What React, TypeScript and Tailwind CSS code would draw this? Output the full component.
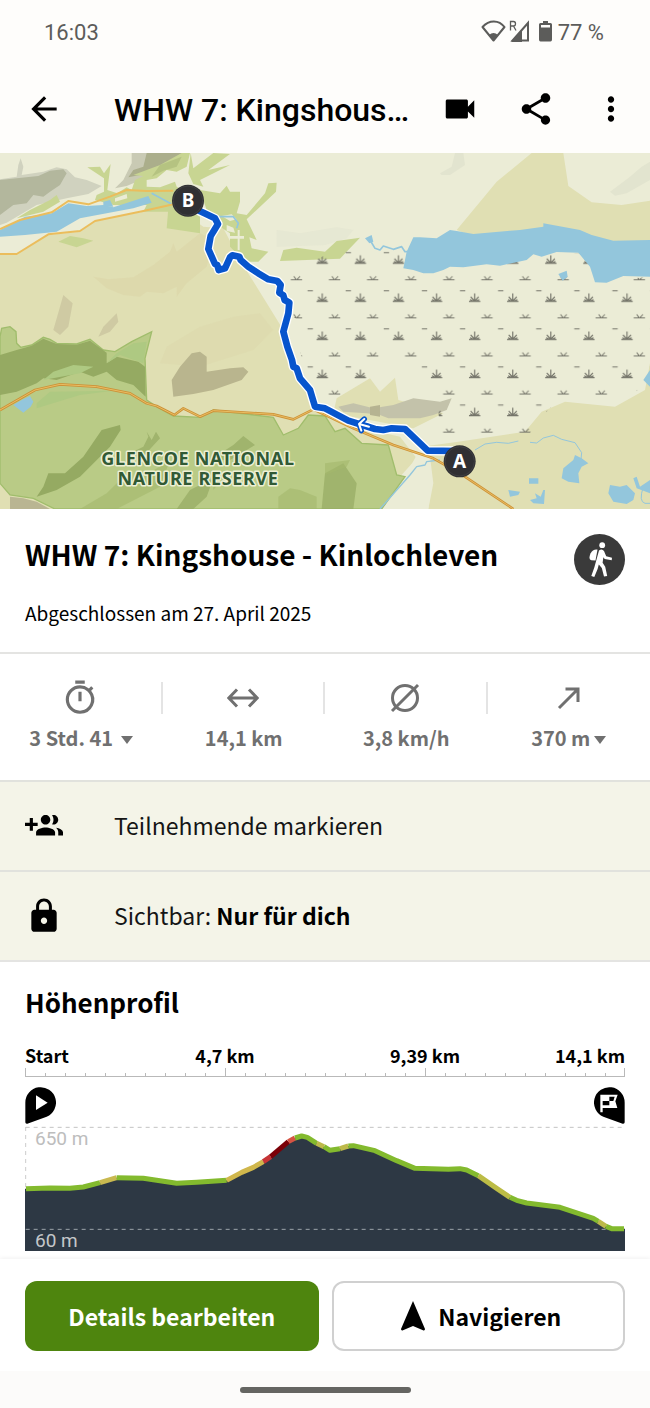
import type { ReactNode } from "react";
import { MdArrowBack, MdLock, MdMoreVert, MdOutlineTimer, MdShare, MdVideocam } from "react-icons/md";

const LAKE = "#93c6dc";

function StatusBar() {
  return (
    <div className="flex h-16 items-center justify-between pl-11 pr-[46px] text-[22px] text-[#5c5c5a]">
      <span>16:03</span>
      <div className="flex items-center">
        <svg className="h-6 w-[52px]" viewBox="0 0 52 24" aria-label="WLAN und Mobilfunk">
          <path d="M1.5 7C8-.5 18-.5 23.500 7L12.500 20.500Z" fill="none" stroke="currentColor" strokeWidth="2" strokeLinejoin="round" />
          <path d="M8 15q4.500-4 9 0l-4.500 6z" fill="currentColor" />
          <path d="M47 3v17.500H31.500z" fill="none" stroke="currentColor" strokeWidth="2" />
          <path d="M30 22 41 10v12z" fill="currentColor" />
          <path d="M29.500 10.500V1.500h3q2 0 2 2.200t-2 2.300h-3m3 0 2.500 4.500" fill="none" stroke="currentColor" strokeWidth="1.300" />
        </svg>
        <svg className="ml-1.5 h-6 w-[13px]" viewBox="0 0 13 24" aria-label="Akku">
          <path d="M4 1h5v2h2.500Q13 3 13 4.500v15q0 2-1.500 2h-10Q0 21.500 0 19.500v-15Q0 3 1.500 3H4zM2 5v2.500h9V5z" fill="currentColor" fillRule="evenodd" />
        </svg>
        <span className="ml-1.5">77 %</span>
      </div>
    </div>
  );
}

function Header() {
  return (
    <header className="flex h-[89px] items-center pl-[25px] pr-5">
      <button aria-label="Zurück"><MdArrowBack size={38} /></button>
      <p className="ml-[51px] min-w-0 flex-1 whitespace-nowrap pt-0.5 text-[32px] font-medium leading-10">WHW 7: Kingshous…</p>
      <button aria-label="Video"><MdVideocam size={38} /></button>
      <button className="ml-[38px]" aria-label="Teilen"><MdShare size={38} /></button>
      <button className="ml-[37px]" aria-label="Mehr"><MdMoreVert size={38} /></button>
    </header>
  );
}

const routePath =
  "M585 176 645 205 654 222 632 258 625 297 645 342 652 345 656 360 675 355 690 322 697 316 718 320 722 330 745 350 775 370 805 388 832 393 842 405 838 428 850 436 854 450 868 458 865 490 850 545 862 590 876 630 880 650 890 655 900 685 930 720 945 770 975 775 1045 812 1125 837 1150 840 1175 835 1215 837 1283 902 1375 903";

function Marker({ x, y, label }: { x: number; y: number; label: string }) {
  return (
    <g>
      <circle cx={x} cy={y} r="48" fill="#303033" />
      <circle cx={x} cy={y} r="44" fill="none" stroke="#454548" strokeWidth="2" />
      <text x={x} y={y + 20} textAnchor="middle" fontSize="57" fontWeight="700" fill="#fff">{label}</text>
    </g>
  );
}

function RouteMap() {
  return (
    <svg className="block w-full font-['Noto_Sans',sans-serif]" viewBox="0 9 1950 1068" role="img" aria-label="Karte der Tour">
      <defs>
        <pattern id="marsh" x="1026" y="294" width="114.300" height="114.300" patternUnits="userSpaceOnUse">
          <g fill="none" stroke="#75756a" strokeWidth="3.500">
            <path d="M38 46h34M55 45V22M54 44 43 32M56 44l11-12M50 45l-9-5M60 45l9-5" />
            <path d="M75 95h34M91 94 84 85M94 94l9-9" strokeWidth="3" />
            <path d="M11 14h16" strokeWidth="3" />
          </g>
        </pattern>
      </defs>
      <rect y="9" width="1950" height="1068" fill="#ebecd6" />

      {/* heath */}
      <g fill="#e0dfb3">
        <path d="M0 315 50 312 145 255 240 245 285 213 430 185 520 165 610 230 670 235 720 330 850 540 880 660 950 760 1070 830 1200 860 1250 925 1200 980 1150 1077H0Z" />
        <path d="M1370 240 1490 95 1595 9H1690L1705 108 1775 157 1865 165 1950 152V290H1500Z" />
        <path d="M1010 745 1110 685 1140 725 1185 683 1195 750 1330 790 1240 835 1000 790Z" />
        <path d="M1265 890 1375 875 1575 845 1625 785 1695 755 1845 770 1935 720 1950 640V1077H1285L1295 1000Z" />
      </g>
      <path d="M1250 915 1290 920 1300 1000 1285 1077H1145L1215 980Z" fill="#ebecd6" />
      <g fill="#e2e4cf">
        <path d="M1320 70 1355 50 1365 9H1390L1395 45 1350 75 1325 75ZM1830 125 1890 80 1925 50 1950 35V90L1880 130 1845 137Z" />
        <path d="M830 240 900 250 1010 232 1060 240 1040 265 975 285 830 290Z" opacity=".5" />
      </g>
      <g fill="#dcd7aa">
        <path d="M280 380 325 388 400 382 460 345 510 305 520 280 530 305 600 250 640 270 620 350 560 400 530 440 530 410 490 430 440 425 420 440 370 435 320 415Z" opacity=".75" />
        <path d="M480 640 500 590 600 530 700 500 780 490 820 540 760 600 600 650Z" opacity=".45" />
        <path d="M160 540 180 470 190 435 218 460 205 530 180 555ZM295 560 310 530 350 490 355 515 330 545Z" fill="#cbc7a0" opacity=".85" />
      </g>

      {/* hill shading, north-west */}
      <path d="M0 88 50 80 55 45 62 25 70 50 65 75 130 65 170 52 200 58 225 82 260 90 305 108 265 132 200 145 110 165 20 218 0 225Z" fill="#d0d2bf" />
      <path d="M0 90 50 85 115 78 150 62 190 58 200 70 180 105 150 125 130 140 100 135 80 160 40 165 0 195Z" fill="#b3b79d" />
      <path d="M395 9H520L560 30 470 70 380 108 345 115 370 90 395 40Z" fill="#c9cab4" />
      <path d="M440 9H565L545 35 500 45 470 65 385 82 400 60 430 50Z" fill="#abae8b" />

      {/* woodland */}
      <g fill="#c8d592">
        <path d="M262 52 300 50 312 70 332 42 322 120 352 130 380 112 395 120 405 90 430 78 400 75 480 45 545 9H570L560 50 530 65 500 60 470 85 440 90V110L480 112 525 95 530 110 545 120V165L510 185 430 185 440 165 340 165 285 150 290 135 312 125 312 85Z" />
        <path d="M572 9 580 55 640 9 690 12 625 60 690 45 600 90 610 110 580 102 565 70ZM600 120 660 130 680 107 690 125 720 125 720 155 710 190 740 195 795 130 805 100 830 98 828 125 740 208 770 270 748 262 755 295 805 305 775 335 735 335 690 290 690 250 660 230 620 180Z" />
        <path d="M505 175 540 165 600 200V250L500 235ZM175 275 210 258 250 265 280 272 230 292ZM850 300 890 293 975 305 1010 273 1080 263 1020 326 840 333ZM90 180l60-30 20-15 10 20-50 30-80 20z" />
      </g>
      <path d="M345 145 380 132 382 145 345 155ZM680 225l20 8 5 15-25-5zM665 198l30-5 15 15-20 5zM690 258h42v8h-42zM713 240h6v60h-6z" fill="#ebecd6" />
      <path d="M455 80 480 45 545 20 530 50 490 62Z" fill="#a9b876" opacity=".6" />

      {/* nature reserve */}
      <path d="M0 560 5 535 30 530 48 545 50 580 62 592 95 585 130 562 150 568 170 580 230 582 270 568 310 600 345 605 395 575 455 545 435 625 440 750 470 770 520 798 600 802 640 780 820 802 850 855 895 835 925 795 975 798 1005 845 1035 835 1085 880 1165 885 1190 975 1215 980 1145 1077H165L100 1045 30 1035 0 1000Z" fill="#b9cb86" stroke="#a0bd6c" strokeWidth="4" />
      <g fill="#95aa62">
        <path d="M0 615 50 600 95 587 130 566 170 582 230 584 270 572 320 608 320 640 350 620 415 635 435 650 437 740 400 705 350 690 320 665 280 680 240 665 170 690 130 685 110 700 50 725 0 735Z" />
        <path d="M360 825 305 840 250 920 195 970 145 970 130 1010 110 1040 170 1020 240 980 330 890 362 840Z" />
        <path d="M440 845 445 860 430 890 390 910 420 930 480 865 468 845 455 870ZM730 858 765 885 690 930 630 930 700 885Z" opacity=".7" />
        <path d="M975 970 1030 940 1070 1000 1060 1077H965ZM530 1077 570 1020 640 985 620 1040 580 1077Z" opacity=".7" />
      </g>
      <g fill="#a3b86d" opacity=".6">
        <path d="M240 1077 320 1030 370 980 400 1000 510 930 480 1010 350 1077ZM640 985 690 960 640 1020ZM835 1077 835 1040 870 1015 900 1020 950 1040V1077ZM975 940 1050 930 1040 950 975 975Z" />
      </g>
      <path d="M110 760 150 725 340 722 240 735 110 775ZM320 640 350 610 400 580 440 575 430 640 360 615ZM130 690 160 665 220 645 280 650 240 670Z" fill="#aec982" />
      <path d="M30 1040 70 1045 110 1055 150 1077H30Z" fill="#b9b592" />

      {/* rocks */}
      <path d="M515 690 540 650 575 610 600 605 620 620 620 665 690 655 730 652 745 665 725 690 640 720 580 732 520 740Z" fill="#b9b58e" />
      <path d="M1015 770 1060 760 1120 775 1180 765 1240 745 1320 755 1355 745 1340 780 1300 795 1260 805 1165 805 1140 795 1100 790 1030 785Z" fill="#c3c2aa" />
      <path d="M1110 770l30-5v35l-30-5z" fill="#b6b391" />

      {/* marsh */}
      <path d="M850 375 940 330 1045 290 1290 305 1300 375 1600 315 1760 310 1785 395 1950 380V700L1840 762 1680 740 1640 785 1590 850H1320L1310 710 1240 695 1220 640 1150 630 1120 700 1010 750 975 735 940 690 900 610 905 520 880 500Z" fill="url(#marsh)" />

      {/* water */}
      <g fill={LAKE}>
        <path d="M0 240 75 200 155 190 205 160 260 168 310 165 340 172 445 138 455 158 400 175 240 205 170 245 75 255 0 260Z" />
        <path d="M310 155l20-5 10 20h-30zM40 765 65 750 90 738 100 755 92 770 70 788Z" />
        <path d="M1240 262 1260 262 1310 265 1350 240 1370 243 1420 252 1530 242 1560 240 1630 230V220L1740 240 1775 255 1840 272 1950 270V380L1870 378 1820 398 1785 397 1770 350 1735 308 1670 306 1625 320 1600 313 1580 330 1500 347 1460 343 1390 352 1350 350 1330 360 1300 370 1270 370 1240 360 1210 355 1220 305Z" />
        <path d="M1095 265 1115 255 1120 275 1108 280ZM1675 372l25-10 3 18-15 12zM1930 690l20-30v50z" />
        <path d="M1685 985 1690 955 1720 930 1725 915 1745 925 1765 940 1745 950 1735 970 1738 1000 1705 995ZM1587 985h28v16h-28zM1525 1020 1560 1025 1555 1035 1530 1040ZM1590 1050 1610 1045 1605 1030 1622 1040 1630 1020 1635 1020 1632 1062 1600 1060ZM1825 1030 1830 1005 1860 1010 1880 1005 1905 1030 1900 1050 1880 1062 1840 1055ZM1900 985 1910 980 1920 1010 1950 990V1030L1910 1015Z" />
      </g>
      <g fill="none" stroke={LAKE} strokeWidth="5" strokeLinejoin="round">
        <path d="M1110 270 1125 295 1140 300 1150 288 1180 298 1205 290 1215 305 1230 305" />
        <path d="M455 130 520 165M640 200 700 200 715 220 710 235" />
        <path d="M1425 900l30-18 35-5 35 3 30-7M1590 877l20 2 20-15 30-8 25 12 40 10 20 30-2 20 10 15" strokeWidth="3" />
        <path d="M1140 1077 1230 975 1250 950 1275 945 1280 935 1320 930" strokeWidth="4" />
        <path d="M1930 1010q-15 45 5 50h15" strokeWidth="3" />
      </g>

      {/* roads */}
      <path d="M0 237 60 210 155 187 205 153 265 163 330 140 380 120 440 123 520 122M0 312 50 312 145 253 240 243 285 213 430 183 520 163" fill="none" stroke="#ebbd5c" strokeWidth="6" strokeLinejoin="round" />
      <path d="M0 780 105 720 180 703 290 710 390 730 440 760 470 768 523 795 550 775 600 800 640 782 820 793 880 808 940 778 1060 835 1180 885 1300 925 1380 970 1540 1077" fill="none" stroke="#cd9238" strokeWidth="8" strokeLinejoin="round" />
      <path d="M0 780 105 720 180 703 290 710 390 730 440 760 470 768 523 795 550 775 600 800 640 782 820 793 880 808 940 778 1060 835 1180 885 1300 925 1380 970 1540 1077" fill="none" stroke="#e9bd62" strokeWidth="3" />

      {/* route */}
      <g fill="none" strokeLinejoin="round" strokeLinecap="round">
        <path d={routePath} stroke="#fff" strokeWidth="28" />
        <path d={routePath} stroke="#0755cd" strokeWidth="20" />
        <path d="M1107 830 1080 823M1093 807 1077 822 1084 842" stroke="#0755cd" strokeWidth="16" />
        <path d="M1107 830 1080 823M1093 807 1077 822 1084 842" stroke="#fff" strokeWidth="6" />
      </g>
      <Marker x={564} y={152} label="B" />
      <Marker x={1379} y={934} label="A" />
      <text fontSize="54" fontWeight="700" letterSpacing="2" fill="#315a35" stroke="#edf0d5" strokeWidth="9" strokeLinejoin="round" paintOrder="stroke" textAnchor="middle">
        <tspan x="594" y="944">GLENCOE NATIONAL</tspan>
        <tspan x="594" y="1006">NATURE RESERVE</tspan>
      </text>
    </svg>
  );
}

function HikerBadge() {
  return (
    <svg className="size-[51px] shrink-0" viewBox="0 0 51 51" role="img" aria-label="Wandern">
      <circle cx="25.500" cy="25.500" r="25.500" fill="#3a3a3a" />
      <circle cx="28.200" cy="11.200" r="2.900" fill="#fff" />
      <path d="M23.500 15.500q-4.500-.8-7 4-2.500 6 .8 6.800l4.200.2z" fill="#fff" />
      <path d="M25 16.500q3-2.500 5 .6l2.200 5.200 5.800 1.400-.3 2.500-7-1.300-1.300-1.600-.8 5.500 2.600 4 2 9.200-3.200.6-2.200-8.600-3-3.500-1.200 4.500-3.300 8-3-1 3-8.500z" fill="#fff" />
    </svg>
  );
}

function Caret() {
  return (
    <svg className="mt-1 h-2 w-3" viewBox="0 0 12 8" aria-hidden="true">
      <path d="M0 0h12L6 8z" fill="currentColor" />
    </svg>
  );
}

function StatCell({ icon, children, last }: { icon: ReactNode; children: ReactNode; last?: boolean }) {
  return (
    <div>
      <div className={last ? "flex h-8 items-center justify-center" : "flex h-8 items-center justify-center border-r-2 border-[#e4e4e4]"}>{icon}</div>
      <div className="mt-2 flex justify-center text-[20px] font-bold leading-8">{children}</div>
    </div>
  );
}

function Stats() {
  return (
    <section className="grid h-32 grid-cols-4 border-t-2 border-[#e4e4e2] pt-7 text-[#707070]">
      <StatCell icon={<MdOutlineTimer size={38} />}>
        <button className="flex items-center gap-2">3 Std. 41 <Caret /></button>
      </StatCell>
      <StatCell icon={
        <svg className="h-5 w-8" viewBox="0 0 32 20" aria-hidden="true" fill="none" stroke="currentColor" strokeWidth="3"><path d="M2 10h28M10 1.500 1.800 10 10 18.500M22 1.500l8.200 8.500-8.200 8.500" /></svg>
      }>14,1 km</StatCell>
      <StatCell icon={
        <svg className="size-[30px]" viewBox="0 0 30 30" aria-hidden="true" fill="none" stroke="currentColor" strokeWidth="3"><circle cx="15" cy="15" r="12.500" /><path d="M2 28 28 2" /></svg>
      }>3,8 km/h</StatCell>
      <StatCell last icon={
        <svg className="size-6" viewBox="0 0 24 24" aria-hidden="true" fill="none" stroke="currentColor" strokeWidth="3"><path d="M2 22 20.500 3.500M8.500 3H21v13" /></svg>
      }>
        <button className="flex items-center gap-1">370 m <Caret /></button>
      </StatCell>
    </section>
  );
}

function ActionRow({ icon, children }: { icon: ReactNode; children: ReactNode }) {
  return (
    <button className="flex h-[90px] w-full items-center gap-[51px] border-t-2 border-[#e1e2dd] bg-[#f4f4e8] px-[25px] text-left text-[23px] leading-9 text-[#151515]">
      {icon}
      <span className="pb-0.5">{children}</span>
    </button>
  );
}

const profile = [
  [78, 326], [150, 324], [210, 325], [250, 321], [300, 308], [350, 293], [430, 295], [530, 310], [590, 307], [680, 301],
  [725, 277], [760, 262], [790, 245], [812, 230], [865, 185], [885, 174], [905, 168], [922, 172], [950, 190], [972, 200],
  [990, 211], [1020, 206], [1045, 198], [1060, 197], [1125, 212], [1190, 242], [1245, 265], [1345, 268], [1380, 266],
  [1400, 270], [1435, 287], [1490, 325], [1530, 352], [1550, 361], [1580, 369], [1680, 382], [1780, 415], [1795, 424],
  [1818, 439], [1835, 446], [1872, 446],
];

const slopes: { from: number; to: number; color: string }[] = [
  { from: 0, to: 4, color: "#83ba2e" },
  { from: 4, to: 5, color: "#c9b950" },
  { from: 5, to: 9, color: "#83ba2e" },
  { from: 9, to: 12, color: "#d0b74c" },
  { from: 12, to: 13, color: "#c63436" },
  { from: 13, to: 14, color: "#7b0008" },
  { from: 14, to: 15, color: "#d65343" },
  { from: 15, to: 18, color: "#83ba2e" },
  { from: 18, to: 19, color: "#bdb94a" },
  { from: 19, to: 21, color: "#83ba2e" },
  { from: 21, to: 22, color: "#bdb94a" },
  { from: 22, to: 30, color: "#83ba2e" },
  { from: 30, to: 32, color: "#bcbc46" },
  { from: 32, to: 37, color: "#83ba2e" },
  { from: 37, to: 38, color: "#bcb94a" },
  { from: 38, to: 40, color: "#83ba2e" },
];

const toPoints = (list: number[][]) => list.map((p) => p.join(",")).join(" ");

function ElevationProfile() {
  const ticks = Array.from({ length: 31 }, (_, i) => i);
  return (
    <section className="border-t-2 border-[#e4e4e2] bg-white px-[25px] pb-2 pt-5">
      <h2 className="text-[26px] font-bold leading-10">Höhenprofil</h2>
      <div className="mt-[21px] grid grid-cols-6 whitespace-nowrap pb-px text-[18px] font-bold leading-6">
        <span>Start</span>
        <span className="col-span-2 text-center">4,7 km</span>
        <span className="col-span-2 text-center">9,39 km</span>
        <span className="text-right">14,1 km</span>
      </div>
      <svg className="block w-full" viewBox="0 0 600 10" aria-hidden="true">
        <g stroke="#b9b9b9" strokeWidth="1">
          <path d="M0 8.500h600" />
          {ticks.map((i) => {
            const x = Math.min(i * 20 + 0.5, 599.5);
            return <path key={i} d={`M${x} ${i % 10 === 0 ? 0 : 5}V9`} />;
          })}
        </g>
      </svg>
      <div className="mt-[9px] flex justify-between">
        <svg className="h-[37px] w-[31px]" viewBox="77 19 93 111" aria-label="Start">
          <path d="M78 66a46 46 0 1 1 64 42L84 129q-6 1-6-4z" fill="#000" />
          <path d="M110 44v44l35-22z" fill="#fff" />
        </svg>
        <svg className="h-[37px] w-[31px]" viewBox="822 19 93 111" aria-label="Ziel">
          <path d="M914 66a46 46 0 1 0-64 42l58 21q6 1 6-4z" fill="#000" />
          <path d="M841 42h52l-7 20 6 20h-44v13h-7z" fill="#fff" />
          <path d="M848 61h20v13h-20zM868 48h16l-4 13h-12z" fill="#000" />
        </svg>
      </div>
      <svg className="block w-full font-[Roboto,sans-serif]" viewBox="75 132 1800 381" role="img" aria-label="Höhenprofil der Tour">
        <path d="M77 141v372" stroke="#ccc" strokeWidth="3" strokeDasharray="12 12" />
        <path d="M77 142H1873" stroke="#c3c3c3" strokeWidth="3" strokeDasharray="12 12" />
        <polygon points={`75,513 75,326 ${toPoints(profile)} 1875,446 1875,513`} fill="#2d3844" />
        <path d="M77 448H1820" stroke="#9da4aa" strokeWidth="3" strokeDasharray="12 12" />
        {slopes.map((s) => (
          <polyline key={s.from} points={toPoints(profile.slice(s.from, s.to + 1))} fill="none" stroke={s.color} strokeWidth="15" strokeLinejoin="round" />
        ))}
        <text x="105" y="196" fontSize="57" fill="#bdbdbd">650 m</text>
        <text x="105" y="501" fontSize="57" fill="#c4c7ca">60 m</text>
      </svg>
    </section>
  );
}

export default function App() {
  return (
    <div className="flex min-h-screen flex-col bg-[#fefdfb] font-[Roboto,sans-serif] text-black">
      <StatusBar />
      <Header />
      <main className="flex-1 bg-white font-['Noto_Sans_CJK_SC',sans-serif]">
        <RouteMap />
        <section className="flex items-start justify-between px-[25px] pb-6 pt-[25px]">
          <div>
            <h1 className="text-[28px] font-bold leading-10">WHW 7: Kingshouse - Kinlochleven</h1>
            <p className="mt-6 text-[19px] leading-[30px]">Abgeschlossen am 27. April 2025</p>
          </div>
          <HikerBadge />
        </section>
        <Stats />
        <ActionRow icon={
          <svg className="size-[38px]" viewBox="0 0 24 24" aria-hidden="true">
            <path d="M8 10H5V7H3v3H0v2h3v3h2v-3h3v-2zm10 1c1.660 0 2.990-1.340 2.990-3S19.660 5 18 5c-.32 0-.63.05-.91.14.57.81.9 1.790.9 2.860s-.34 2.040-.9 2.860c.28.09.59.14.91.14zm-5 0c1.660 0 2.990-1.340 2.990-3S14.660 5 13 5s-3 1.340-3 3 1.340 3 3 3zm6.620 2.160c.83.73 1.380 1.660 1.380 2.840v2h3v-2c0-1.540-2.370-2.490-4.380-2.840zM13 13c-2 0-6 1-6 3v2h12v-2c0-2-4-3-6-3z" />
          </svg>
        }>Teilnehmende markieren</ActionRow>
        <ActionRow icon={<MdLock size={38} className="text-black" />}>
          Sichtbar: <strong className="text-black">Nur für dich</strong>
        </ActionRow>
        <ElevationProfile />
      </main>
      <footer className="font-['Noto_Sans_CJK_SC',sans-serif]">
        <div className="grid grid-cols-2 gap-[13px] bg-white px-[25px] pb-5 pt-[22px] text-[23px] font-bold shadow-[0_-1px_4px_rgba(0,0,0,0.06)]">
          <button className="h-[70px] rounded-xl bg-[#4e850e] text-white">Details bearbeiten</button>
          <button className="flex h-[70px] items-center justify-center gap-[13px] rounded-xl border-2 border-[#d0d0d0] pl-1.5">
            <svg className="h-[30px] w-6" viewBox="0 0 24 30" aria-hidden="true">
              <path d="M12 0 24 28q0 2-2 1.300L12 25 2 29.300Q0 30 0 28z" />
            </svg>
            Navigieren
          </button>
        </div>
        <div className="flex h-[37px] items-center justify-center bg-[#fcfbfa]">
          <div className="h-1.5 w-[171px] rounded-full bg-[#656562]" />
        </div>
      </footer>
    </div>
  );
}
